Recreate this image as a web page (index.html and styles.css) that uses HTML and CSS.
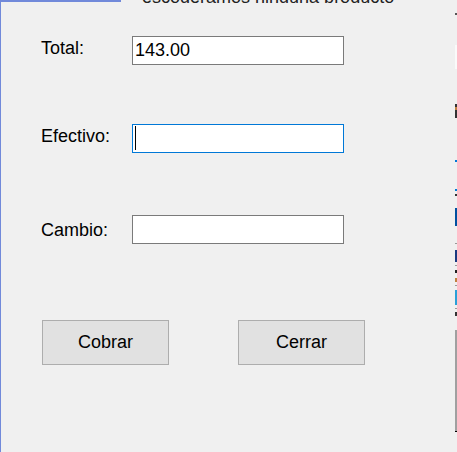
FILE: index.html
```html
<!DOCTYPE html>
<html lang="es">
<head>
    <meta charset="UTF-8">
    <meta name="viewport" content="width=device-width, initial-scale=1.0">
    <title>Cobrar</title>
    <link rel="stylesheet" href="styles.css">
</head>
<body>
    <div class="window">
        <div class="edge-left"></div>

        <div class="center">
            <div class="top-strip">
                <div class="title-accent"></div>
                <div class="behind"><span>escogeramos ninguna producto</span></div>
            </div>

            <form class="dialog" onsubmit="return false">
                <div class="field field-total">
                    <label for="total">Total:</label>
                    <input id="total" class="textbox" type="text" value="143.00" readonly>
                </div>

                <div class="field field-efectivo">
                    <label for="efectivo">Efectivo:</label>
                    <span class="input-wrap">
                        <input id="efectivo" class="textbox focused" type="text" value="">
                        <span class="caret"></span>
                    </span>
                </div>

                <div class="field field-cambio">
                    <label for="cambio">Cambio:</label>
                    <input id="cambio" class="textbox" type="text" value="" readonly>
                </div>

                <div class="buttons">
                    <button type="button" class="win-button">Cobrar</button>
                    <button type="button" class="win-button">Cerrar</button>
                </div>
            </form>
        </div>

        <div class="edge-right"></div>
    </div>
</body>
</html>
```

FILE: styles.css
```css
body {
    margin: 0;
    padding: 0;
    background-color: #f0f0f0;
    font-family: 'Liberation Sans', Arial, sans-serif;
    color: #000;
}

.window {
    display: flex;
    width: 457px;
    height: 452px;
    overflow: hidden;
}

.edge-left {
    width: 1px;
    background-color: #7189da;
}

.center {
    flex: 1;
    display: flex;
    flex-direction: column;
}

/* strip of the window behind, cut off at the top */
.top-strip {
    display: flex;
    height: 3px;
}

.title-accent {
    width: 120px;
    height: 2px;
    background-color: #7189da;
}

.behind {
    flex: 1;
    overflow: hidden;
    padding-left: 21px;
}

.behind span {
    display: block;
    margin-top: -13px;
    font-size: 18px;
    line-height: 20px;
    color: #222;
    white-space: nowrap;
}

.dialog {
    flex: 1;
    margin: 0;
    padding: 0 0 0 40px;
    background-color: #f0f0f0;
}

.field {
    display: flex;
    align-items: flex-start;
}

.field label {
    width: 91px;
    font-size: 18px;
    line-height: 20px;
    padding-top: 2px;
}

.field-total {
    margin-top: 33px;
}

.field-efectivo {
    margin-top: 59px;
}

.field-cambio {
    margin-top: 62px;
}

.field-cambio label {
    padding-top: 5px;
}

.textbox {
    box-sizing: border-box;
    width: 212px;
    height: 29px;
    margin: 0;
    padding: 0 2px;
    border: 1px solid #7a7a7a;
    border-radius: 0;
    background-color: #fff;
    font-family: 'Liberation Sans', Arial, sans-serif;
    font-size: 18px;
    color: #000;
    outline: none;
}

.textbox.focused {
    border-color: #0078d7;
}

.input-wrap {
    position: relative;
    display: block;
    height: 29px;
}

.caret {
    position: absolute;
    left: 3px;
    top: 2px;
    width: 1px;
    height: 24px;
    background-color: #000;
}

.buttons {
    display: flex;
    gap: 69px;
    margin-top: 76px;
    padding-left: 1px;
}

.win-button {
    box-sizing: border-box;
    width: 127px;
    height: 45px;
    margin: 0;
    padding: 0;
    border: 1px solid #adadad;
    border-radius: 0;
    background-color: #e1e1e1;
    font-family: 'Liberation Sans', Arial, sans-serif;
    font-size: 18px;
    color: #000;
}

/* pieces of the window behind, on the right side */
.edge-right {
    width: 2px;
    background: linear-gradient(to bottom,
        #f0f0f0 0, #f0f0f0 13px,
        #555 13px, #555 15px,
        #f0f0f0 15px, #f0f0f0 45px,
        #fafafa 45px, #fafafa 69px,
        #f0f0f0 69px, #f0f0f0 104px,
        #333 104px, #333 107px,
        #c08040 107px, #c08040 110px,
        #333 110px, #333 118px,
        #f0f0f0 118px, #f0f0f0 160px,
        #0078d7 160px, #0078d7 162px,
        #f0f0f0 162px, #f0f0f0 189px,
        #0078d7 189px, #0078d7 191px,
        #f0f0f0 191px, #f0f0f0 194px,
        #333 194px, #333 196px,
        #f0f0f0 196px, #f0f0f0 208px,
        #0050a0 208px, #0050a0 226px,
        #f0f0f0 226px, #f0f0f0 243px,
        #999 243px, #999 244px,
        #f0f0f0 244px, #f0f0f0 250px,
        #1a3a80 250px, #1a3a80 262px,
        #f0f0f0 262px, #f0f0f0 265px,
        #999 265px, #999 266px,
        #f0f0f0 266px, #f0f0f0 270px,
        #222 270px, #222 273px,
        #f0f0f0 273px, #f0f0f0 278px,
        #c08040 278px, #c08040 282px,
        #f0f0f0 282px, #f0f0f0 285px,
        #999 285px, #999 286px,
        #f0f0f0 286px, #f0f0f0 290px,
        #2aa0d8 290px, #2aa0d8 305px,
        #f0f0f0 305px, #f0f0f0 308px,
        #999 308px, #999 309px,
        #f0f0f0 309px, #f0f0f0 312px,
        #333 312px, #333 316px,
        #f0f0f0 316px, #f0f0f0 330px,
        #a0a0a0 330px, #a0a0a0 431px,
        #000 431px, #000 432px,
        #f0f0f0 432px, #f0f0f0 100%);
}
```
